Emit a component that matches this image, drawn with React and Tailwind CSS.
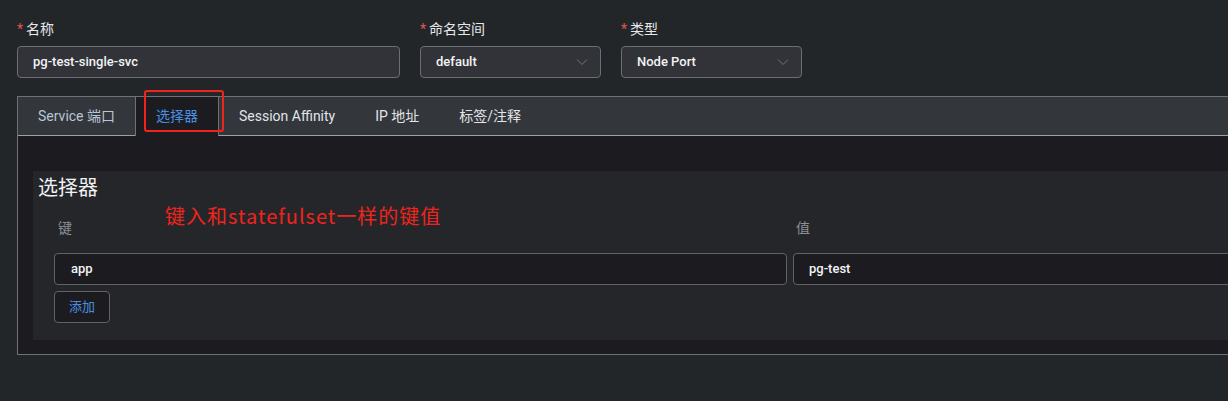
import React from "react";

const FONT = { fontFamily: 'Roboto, "Noto Sans CJK SC", sans-serif' };
const CJK = { fontFamily: '"Noto Sans CJK SC", sans-serif' };

const Label = ({ children }) => (
  <div className="flex h-[18px] items-center text-[14px] leading-[18px] text-[#e6e8eb]">
    <span className="mr-[3px] text-[#e5534b]">*</span>
    {children}
  </div>
);

const Chevron = () => (
  <svg width="12" height="8" viewBox="0 0 12 8" fill="none" className="shrink-0">
    <path d="M1 1.5 6 6.5 11 1.5" stroke="#6f7378" strokeWidth="1" />
  </svg>
);

const Select = ({ value, className = "" }) => (
  <div
    className={`flex h-[32px] items-center justify-between rounded-[4px] border border-[#6b6e73] bg-[#313338] pl-[15px] pr-[12px] text-[13px] font-medium text-[#f2f3f5] ${className}`}
  >
    <span>{value}</span>
    <Chevron />
  </div>
);

const tabs = ["Service 端口", "选择器", "Session Affinity", "IP 地址", "标签/注释"];

export default function App() {
  return (
    <div className="h-[401px] w-full overflow-hidden bg-[#232629] pt-[20px]" style={FONT}>
      {/* top fields */}
      <div className="flex gap-[20px] pl-[17px]">
        <div className="w-[383px]">
          <Label>名称</Label>
          <div className="mt-[8px] flex h-[32px] items-center rounded-[4px] border border-[#6b6e73] bg-[#313338] pl-[15px] text-[13px] font-medium text-[#f2f3f5]">
            pg-test-single-svc
          </div>
        </div>
        <div className="w-[181px]">
          <Label>命名空间</Label>
          <Select value="default" className="mt-[8px]" />
        </div>
        <div className="w-[181px]">
          <Label>类型</Label>
          <Select value="Node Port" className="mt-[8px]" />
        </div>
      </div>

      {/* tabs box */}
      <div className="relative ml-[17px] mt-[18px] w-[1560px] border border-[#6e7175]">
        <div className="flex h-[39px] border-b border-[#9c9fa3] bg-[#33363b] text-[14px]">
          {tabs.map((t, i) =>
            i === 1 ? (
              <div
                key={t}
                className="-mb-px flex h-[39px] items-center border-x border-[#6e7175] bg-[#1c1c20] px-[20px] text-[#4b8ee0]"
              >
                {t}
              </div>
            ) : (
              <div
                key={t}
                className={`flex items-center px-[20px] ${i === 0 ? "text-[#b9c6d6]" : "text-[#e2e4e8]"}`}
              >
                {t}
              </div>
            )
          )}
        </div>

        {/* annotation box over active tab */}
        <div className="absolute left-[126px] top-[-7px] h-[42px] w-[80px] rounded-[3px] border-2 border-[#f0241c]" />

        <div className="bg-[#1c1c20] pb-[14px] pl-[15px] pt-[35px]">
          <div className="relative h-[169px] bg-[#25262a] pl-[5px] pt-[4px]">
            <div className="text-[20px] leading-[26px] text-[#f0f1f3]">选择器</div>
            <div
              className="absolute left-[132px] top-[32px] text-[20px] font-normal leading-[26px] tracking-[1px] text-[#f0241c]"
              style={CJK}
            >
              键入和statefulset一样的键值
            </div>

            <div className="ml-[16px] mt-[17px] flex gap-[6px]">
              <div className="w-[733px]">
                <div className="pl-[4px] text-[14px] leading-[20px] text-[#8c8f94]">键</div>
                <div className="mt-[15px] flex h-[32px] items-center rounded-[4px] border border-[#5f6266] bg-[#1c1c20] pl-[16px] text-[13px] font-medium text-[#f2f3f5]">
                  app
                </div>
              </div>
              <div className="w-[733px]">
                <div className="pl-[3px] text-[14px] leading-[20px] text-[#8c8f94]">值</div>
                <div className="mt-[15px] flex h-[32px] items-center rounded-[4px] border border-[#5f6266] bg-[#1c1c20] pl-[15px] text-[13px] font-medium text-[#f2f3f5]">
                  pg-test
                </div>
              </div>
            </div>

            <div className="ml-[16px] mt-[6px] flex h-[32px] w-[56px] items-center justify-center rounded-[4px] border border-[#5f6266] bg-[#1c1c20] text-[13px] text-[#4b8ee0]">
              添加
            </div>
          </div>
        </div>
      </div>
    </div>
  );
}
